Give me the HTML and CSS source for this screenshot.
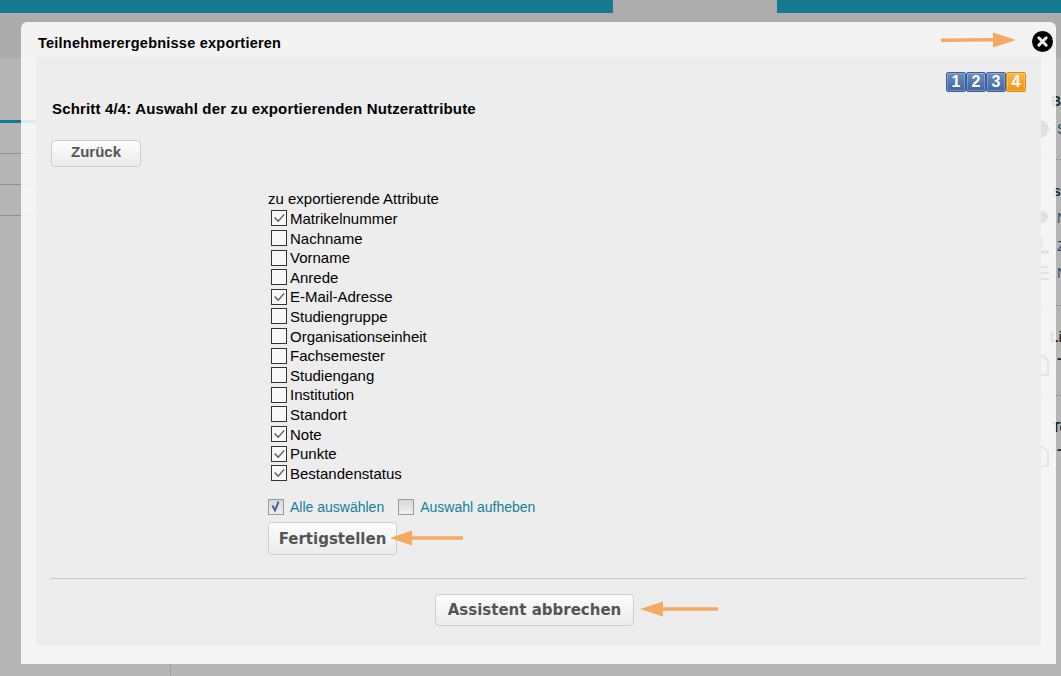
FILE: index.html
```html
<!DOCTYPE html>
<html lang="de">
<head>
<meta charset="utf-8">
<title>Teilnehmerergebnisse exportieren</title>
<link rel="stylesheet" href="styles.css">
</head>
<body>
<svg class="defs" width="0" height="0" aria-hidden="true"><defs>
  <symbol id="tick" viewBox="0 0 13 13"><path d="M2.6 6.6L6.2 10.2L12.2 3.4" fill="none" stroke="#5a5a5a" stroke-width="1.4"/></symbol>
  <symbol id="tick-blue" viewBox="0 0 13 13"><path d="M3.4 5.6L6 10.4L9.6 1.6" fill="none" stroke="#4a5ea8" stroke-width="2"/></symbol>
</defs></svg>
<div class="page">
  <div class="topbar"><div class="teal-a"></div><div class="gap"></div><div class="teal-b"></div></div>
  <div class="band"></div>
  <div class="backdrop">
    <div class="left-lines">
      <div class="tab-line"></div>
      <div class="row-line r1"></div>
      <div class="row-line"></div>
      <div class="row-line"></div>
    </div>
    <div class="dotted"></div>
    <div class="side">
      <div class="s-head h1">B</div>
      <div class="s-row r-first">
        <svg class="ghost" width="18" height="18" viewBox="0 0 18 18"><circle cx="9" cy="9" r="9" fill="#333"/></svg><span>S</span>
      </div>
      <div class="s-dash d1"></div>
      <div class="s-head h2">s</div>
      <div class="s-row r-a"><svg class="ghost" width="18" height="16" viewBox="0 0 18 16"><circle cx="11" cy="7" r="6" fill="#333"/></svg><span>N</span></div>
      <div class="s-row"><svg class="ghost" width="18" height="18" viewBox="0 0 18 18"><path d="M10 1v9M10 15h8" stroke="#444" stroke-width="3" fill="none"/></svg><span>Z</span></div>
      <div class="s-row"><svg class="ghost" width="18" height="18" viewBox="0 0 18 18"><path d="M9 3h9M9 9h9M9 15h9" stroke="#444" stroke-width="2" fill="none"/></svg><span>N</span></div>
      <div class="s-dash d2"></div>
      <div class="s-head h3">Li</div>
      <div class="s-row r-doc"><svg class="ghost" width="18" height="21" viewBox="0 0 18 21"><path d="M10 1h2l5 5v14H10" fill="none" stroke="#555" stroke-width="2"/></svg><span class="mini">-</span></div>
      <div class="s-dash d3"></div>
      <div class="s-head h4">Te</div>
      <div class="s-row r-doc2"><svg class="ghost" width="18" height="21" viewBox="0 0 18 21"><path d="M10 1h2l5 5v14H10" fill="none" stroke="#555" stroke-width="2"/></svg><span class="mini">-</span></div>
    </div>
  </div>
</div>

<div class="modal">
  <div class="modal-head">
    <h1 class="modal-title">Teilnehmerergebnisse exportieren</h1>
    <button class="close" aria-label="Schließen">
      <svg width="21" height="21" viewBox="0 0 21 21"><circle cx="10.5" cy="10.5" r="10.5" fill="#000"/><path d="M6.8 6.8l7.4 7.4M14.2 6.8l-7.4 7.4" stroke="#eee" stroke-width="3" stroke-linecap="round"/></svg>
    </button>
  </div>
  <div class="modal-body">
    <div class="steps">
      <span class="step">1</span><span class="step">2</span><span class="step">3</span><span class="step on">4</span>
    </div>
    <h2 class="step-title">Schritt 4/4: Auswahl der zu exportierenden Nutzerattribute</h2>
    <button class="btn back">Zurück</button>
    <div class="form">
      <div class="form-label">zu exportierende Attribute</div>
      <ul class="attrs">
        <li><span class="cb"><svg class="tick"><use href="#tick"/></svg></span>Matrikelnummer</li>
        <li><span class="cb"></span>Nachname</li>
        <li><span class="cb"></span>Vorname</li>
        <li><span class="cb"></span>Anrede</li>
        <li><span class="cb"><svg class="tick"><use href="#tick"/></svg></span>E-Mail-Adresse</li>
        <li><span class="cb"></span>Studiengruppe</li>
        <li><span class="cb"></span>Organisationseinheit</li>
        <li><span class="cb"></span>Fachsemester</li>
        <li><span class="cb"></span>Studiengang</li>
        <li><span class="cb"></span>Institution</li>
        <li><span class="cb"></span>Standort</li>
        <li><span class="cb"><svg class="tick"><use href="#tick"/></svg></span>Note</li>
        <li><span class="cb"><svg class="tick"><use href="#tick"/></svg></span>Punkte</li>
        <li><span class="cb"><svg class="tick"><use href="#tick"/></svg></span>Bestandenstatus</li>
      </ul>
      <div class="select-links">
        <a class="sel-link"><span class="mini-cb"><svg class="tick"><use href="#tick-blue"/></svg></span>Alle auswählen</a>
        <a class="sel-link"><span class="mini-cb"></span>Auswahl aufheben</a>
      </div>
      <button class="btn big finish">Fertigstellen</button>
    </div>
    <div class="footer"><button class="btn big cancel">Assistent abbrechen</button></div>
  </div>
</div>

<svg class="arrow a-close" width="75" height="16" viewBox="0 0 75 16"><path d="M0 6.4L52 6V0.5L75 8L52 15.5V9.6L0 10z" fill="#f5a962"/></svg>
<svg class="arrow a-finish" width="73" height="16" viewBox="0 0 73 16"><path d="M0 8L22 0.5V6.2H73V9.8H22V15.5z" fill="#f5a962"/></svg>
<svg class="arrow a-cancel" width="78" height="16" viewBox="0 0 78 16"><path d="M0 8L23 0.5V6.2H78V9.8H23V15.5z" fill="#f5a962"/></svg>
</body>
</html>
```
FILE: styles.css
```css
* { box-sizing: border-box; }
html, body { margin: 0; padding: 0; height: 100%; overflow: hidden; }
body { background: #b5b5b5; font-family: "Liberation Sans", Arial, sans-serif; color: #000; }
.defs { position: absolute; }

.page { display: flex; flex-direction: column; height: 676px; }
.topbar { display: flex; height: 13px; background: #b5b5b5; flex: none; }
.teal-a { width: 613px; background: #137a91; }
.gap { width: 164px; background: #adadad; }
.teal-b { flex: 1; background: #137a91; }
.band { height: 45px; background: #acacac; flex: none; }
.backdrop { flex: 1; display: flex; position: relative; }

.left-lines { width: 36px; flex: none; }
.tab-line { height: 3px; margin-top: 62px; background: #137a91; }
.row-line { height: 1px; margin-top: 30px; background: #8f8f8f; }

.dotted { position: absolute; left: 170px; top: 606px; height: 12px; border-left: 1px dotted #8f8f8f; }

.side { margin-left: auto; width: 31px; padding-top: 33px; font-size: 14px; color: #2a2a2a; display: flex; flex-direction: column; overflow: hidden; }
.s-head { font-weight: bold; height: 20px; line-height: 20px; white-space: nowrap; padding-left: 21px; }
.s-row { display: flex; align-items: center; gap: 8px; height: 27.5px; padding-left: 1px; white-space: nowrap; }
.s-row span { color: #2b4a68; }
.s-row .mini { color: #222; font-weight: bold; align-self: flex-start; margin-top: -1px; }
.ghost { flex: none; }
.r-first { height: 28px; margin-top: 4px; }
.s-dash { height: 1px; border-top: 1px dotted #8a8a8a; }
.d1 { margin-top: 16px; }
.h2 { margin-top: 21px; padding-left: 23px; }
.r-a { margin-top: 3.5px; }
.d2 { margin-top: 18px; }
.h3 { margin-top: 21px; padding-left: 20px; }
.r-doc { height: 28px; margin-top: 4px; }
.r-doc2 { height: 28px; margin-top: 5px; }
.d3 { margin-top: 16px; }
.h4 { margin-top: 21px; padding-left: 22px; }

.modal { position: absolute; left: 21px; top: 22px; width: 1035px; height: 642px; background: rgba(255,255,255,.85); border-radius: 6px 6px 0 0; display: flex; flex-direction: column; }
.modal-head { height: 35px; flex: none; display: flex; align-items: center; justify-content: space-between; padding: 0 3px 0 17px; }
.modal-title { margin: 0; font-size: 14.5px; font-weight: bold; padding-top: 7px; letter-spacing: .23px; }
.close { border: 0; background: none; padding: 0; width: 21px; height: 21px; margin-top: 3px; display: block; }
.modal-body { position: relative; margin: 0 15px 18px; flex: 1; background: #ededed; padding: 15px 15px 0; display: flex; flex-direction: column; }

.steps { display: flex; justify-content: flex-end; height: 20px; }
.step { width: 20px; height: 20px; border: 1px solid #3a5f96; border-radius: 2px; background: linear-gradient(#6f8fbd, #3f66a0); box-shadow: inset 0 0 0 1px rgba(255,255,255,.25); color: #fff; font-weight: bold; font-size: 16px; line-height: 18px; text-align: center; }
.step.on { background: linear-gradient(#fdb84a, #f0940f); border-color: #e08a10; }

.step-title { margin: 8px 0 0 1px; font-size: 15px; line-height: 18px; font-weight: bold; letter-spacing: .16px; }

.btn { font-family: "DejaVu Sans", Verdana, sans-serif; font-weight: bold; color: #555; background: linear-gradient(#fdfdfd, #ebebeb); border: 1px solid #cfcfcf; border-radius: 4px; padding: 0; }
.back { width: 90px; height: 27px; margin-top: 22px; padding-bottom: 5px; font-family: "Liberation Sans", Arial, sans-serif; font-size: 15px; }
.big { font-size: 15px; }

.form { margin: 23px 0 0 217px; display: flex; flex-direction: column; align-items: flex-start; }
.form-label { font-size: 15px; line-height: 17px; height: 17px; }
.attrs { list-style: none; margin: 1.7px 0 0 3px; padding: 0; font-size: 15px; }
.attrs li { display: flex; align-items: center; height: 19.6px; white-space: nowrap; }
.cb { width: 16px; height: 16px; border: 1.5px solid #333; background: #f8f8f8; margin-right: 3px; flex: none; }
.tick { display: block; width: 13px; height: 13px; }

.select-links { display: flex; gap: 14px; margin-top: 16.3px; font-size: 14px; }
.sel-link { display: flex; align-items: center; color: #13809a; white-space: nowrap; }
.mini-cb { width: 16px; height: 16px; border: 1.5px solid #9a9a9a; background: linear-gradient(#d8d8d8, #f0f0f0); margin-right: 6px; flex: none; }

.finish { width: 129px; height: 33px; margin-top: 7px; }
.footer { margin-top: 23px; border-top: 1px solid #c6c6c6; display: flex; justify-content: center; padding: 15px 8px 0 0; }
.cancel { width: 199px; height: 32px; }

.arrow { position: absolute; }
.a-close { left: 941px; top: 32px; }
.a-finish { left: 390px; top: 530px; }
.a-cancel { left: 640px; top: 601px; }
```
